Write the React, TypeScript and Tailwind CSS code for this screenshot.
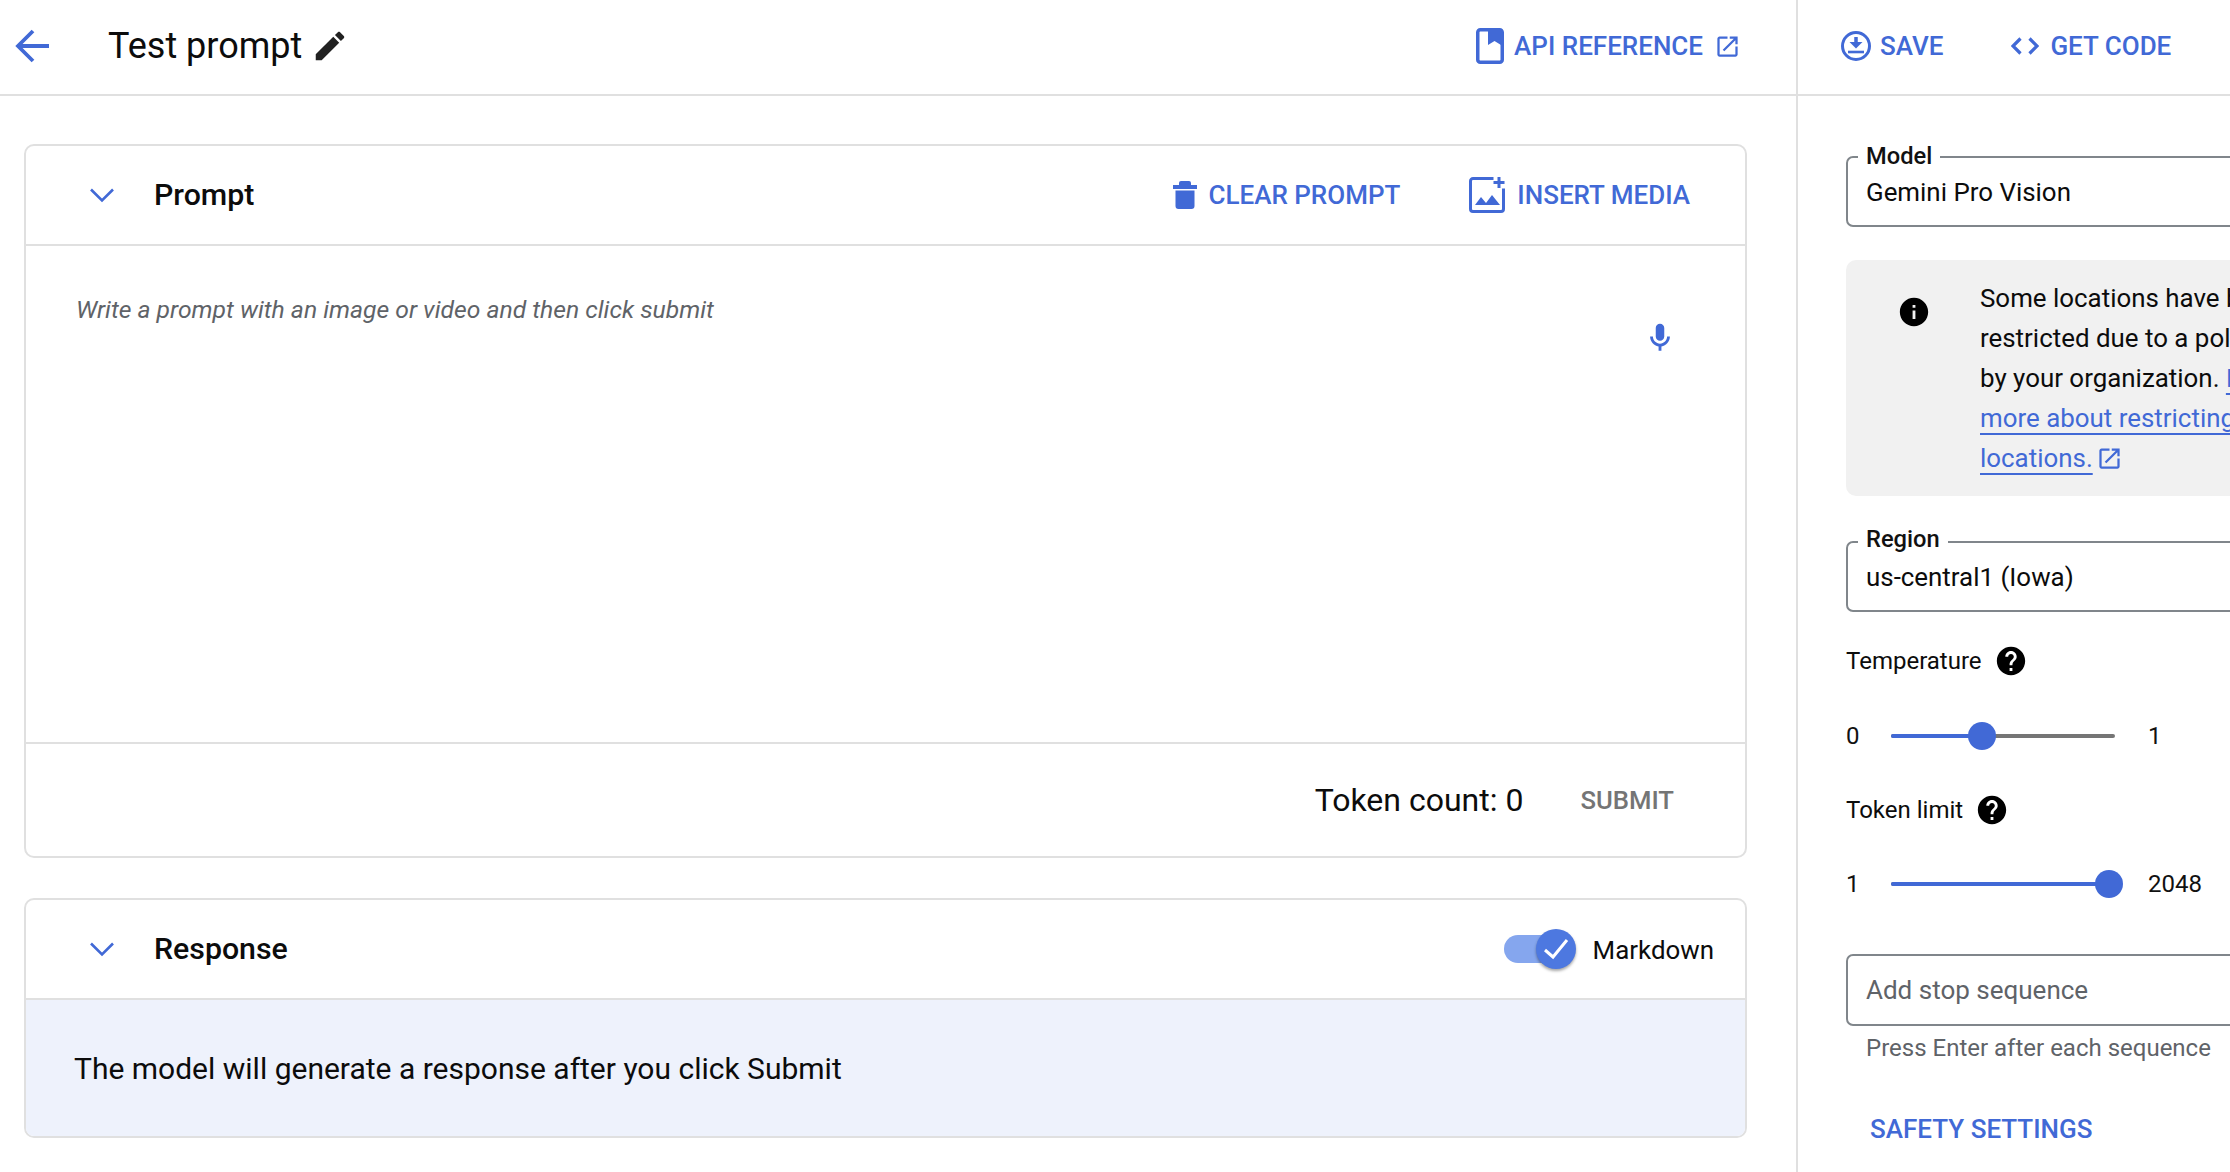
const B = "#4169d6";

function Mi({ d, size, color = B, className = "" }: { d: string; size: number; color?: string; className?: string }) {
  return (
    <svg width={size} height={size} viewBox="0 0 24 24" fill={color} className={"shrink-0 " + className}>
      <path d={d} />
    </svg>
  );
}

const EDIT = "M3 17.25V21h3.75L17.81 9.94l-3.75-3.75L3 17.25zM20.71 7.04c.39-.39.39-1.02 0-1.41l-2.34-2.34c-.39-.39-1.02-.39-1.41 0l-1.83 1.83 3.75 3.75 1.83-1.83z";
const OPEN = "M19 19H5V5h7V3H5c-1.11 0-2 .9-2 2v14c0 1.1.89 2 2 2h14c1.1 0 2-.9 2-2v-7h-2v7zM14 3v2h3.59l-9.83 9.83 1.41 1.41L19 6.41V10h2V3h-7z";
const MIC = "M12 14c1.66 0 3-1.34 3-3V5c0-1.66-1.34-3-3-3S9 3.34 9 5v6c0 1.66 1.34 3 3 3zM17 11c0 2.76-2.24 5-5 5s-5-2.24-5-5H5c0 3.53 2.61 6.43 6 6.92V21h2v-3.08c3.39-.49 6-3.39 6-6.92h-2z";
const INFO = "M12 2C6.48 2 2 6.48 2 12s4.48 10 10 10 10-4.48 10-10S17.52 2 12 2zm1 15h-2v-6h2v6zm0-8h-2V7h2v2z";
const HELP = "M12 2C6.48 2 2 6.48 2 12s4.48 10 10 10 10-4.48 10-10S17.52 2 12 2zm1 17h-2v-2h2v2zm2.07-7.75l-.9.92C13.45 12.9 13 13.5 13 15h-2v-.5c0-1.1.45-2.1 1.17-2.83l1.24-1.26c.37-.36.59-.86.59-1.41 0-1.1-.9-2-2-2s-2 .9-2 2H8c0-2.21 1.79-4 4-4s4 1.79 4 4c0 .88-.36 1.68-.93 2.25z";

function Chevron() {
  return (
    <svg width="26" height="16" viewBox="0 0 26 16" fill="none" stroke={B} strokeWidth="2.6" className="shrink-0">
      <path d="M2 2.5 L13 13.5 L24 2.5" />
    </svg>
  );
}

function Field({ label, value, labelClass }: { label: string; value: string; labelClass: string }) {
  return (
    <div className="relative h-[71px] w-[420px] rounded-[7px] border-2 border-[#80868b] pl-[18px] pt-[15px] text-[25.9px] text-[#0c0c0c]">
      <span className={"absolute left-[10px] bg-white px-[8px] text-[23.7px] font-medium leading-[30px] text-[#111] " + labelClass}>{label}</span>
      <span className="leading-[32px]">{value}</span>
    </div>
  );
}

function Slider({ left, right, pct }: { left: string; right: string; pct: number }) {
  return (
    <div className="flex h-[28px] items-center text-[24px] text-[#111]">
      <span className="w-[45px]">{left}</span>
      <div className="relative h-[4px] w-[224px] rounded-full bg-[#757575]">
        <div className="absolute left-0 top-0 h-[4px] rounded-full bg-[#4169d6]" style={{ width: pct + "%" }} />
        <div className="absolute top-[-12px] ml-[-14px] h-[28px] w-[28px] rounded-full bg-[#4169d6]" style={{ left: pct + "%" }} />
      </div>
      <span className="ml-[33px]">{right}</span>
    </div>
  );
}

export default function App() {
  return (
    <div className="flex h-[1172px] w-[2230px] overflow-hidden bg-white font-['Roboto',sans-serif] text-[#0c0c0c]">
      {/* Left column */}
      <div className="flex h-full w-[1798px] shrink-0 flex-col border-r-2 border-[#e0e0e0]">
        <header className="flex h-[96px] shrink-0 items-center border-b-2 border-[#e0e0e0] pb-[2px]">
          <svg width="36" height="36" viewBox="0 0 36 36" fill="none" stroke={B} strokeWidth="3.8" className="ml-[15px] shrink-0">
            <path d="M34 18 H4 M18 3 L3 18 L18 33" />
          </svg>
          <h1 className="ml-[57px] text-[36px] font-normal leading-none">Test prompt</h1>
          <Mi d={EDIT} size={38} color="#212121" className="ml-[9px]" />
          <div className="ml-auto flex items-center pr-[55px]">
            <svg width="28" height="36" viewBox="0 0 28 36" className="shrink-0">
              <rect x="1.750" y="1.750" width="24.500" height="32.500" rx="2.500" fill="none" stroke={B} strokeWidth="3.500" />
              <path d="M12 2h13v15l-6.500-4L12 17z" fill={B} />
            </svg>
            <span className="ml-[10px] text-[26px] font-medium text-[#4169d6]">API REFERENCE</span>
            <Mi d={OPEN} size={27} className="ml-[11px]" />
          </div>
        </header>
        <main className="flex flex-1 flex-col gap-[40px] pl-[24px] pr-[49px] pt-[48px]">
          <section className="flex h-[714px] flex-col rounded-[10px] border-2 border-[#e0e0e0]">
            <div className="flex h-[100px] shrink-0 items-center border-b-2 border-[#e0e0e0] pl-[63px] pr-[55px]">
              <Chevron />
              <h2 className="ml-[39px] text-[30.3px] font-medium leading-none">Prompt</h2>
              <svg width="24" height="28" viewBox="0 0 24 28" className="ml-auto shrink-0" fill={B}>
                <rect x="6" y="0" width="12" height="6" rx="2" />
                <rect x="0" y="4" width="24" height="4" />
                <path d="M2.500 9.500h19V25a3 3 0 0 1-3 3h-13a3 3 0 0 1-3-3z" />
              </svg>
              <span className="ml-[12px] text-[26px] font-medium text-[#4169d6]">CLEAR PROMPT</span>
              <svg width="36" height="36" viewBox="0 0 36 36" className="ml-[69px] shrink-0" fill="none">
                <path d="M24.500 1.500H4a2.500 2.500 0 0 0-2.500 2.500V32A2.500 2.500 0 0 0 4 34.500H32a2.500 2.500 0 0 0 2.500-2.500V11.500" stroke={B} strokeWidth="3" />
                <path d="M30 0v11M24.500 5.500h11" stroke={B} strokeWidth="3" />
                <path d="M6 28L12 20L17 26L23 18L31 28z" fill={B} />
              </svg>
              <span className="ml-[12px] text-[26px] font-medium text-[#4169d6]">INSERT MEDIA</span>
            </div>
            <div className="flex flex-1 items-start justify-between border-b-2 border-[#e0e0e0] pl-[50px] pr-[68px] pt-[50px]">
              <p className="text-[24.7px] italic leading-[28px] text-[#5f6368]">Write a prompt with an image or video and then click submit</p>
              <Mi d={MIC} size={34} className="mt-[25px]" />
            </div>
            <div className="flex h-[112px] shrink-0 items-center justify-end pr-[71px]">
              <span className="mr-[-3px] text-[32px]">Token count: 0</span>
              <span className="ml-[60px] text-[25.7px] font-medium text-[#757575]">SUBMIT</span>
            </div>
          </section>
          <section className="flex h-[240px] flex-col rounded-[10px] border-2 border-[#e0e0e0]">
            <div className="flex h-[100px] shrink-0 items-center border-b-2 border-[#e0e0e0] pl-[63px] pr-[31px]">
              <Chevron />
              <h2 className="ml-[39px] text-[30.3px] font-medium leading-none">Response</h2>
              <div className="relative ml-auto mr-[1px] h-[28px] w-[60px] rounded-full bg-[#85a6ee]">
                <div className="absolute right-[-12px] top-[-6px] flex h-[40px] w-[40px] items-center justify-center rounded-full bg-[#4d78e0] shadow-[0_2px_3px_rgba(0,0,0,0.35)]">
                  <svg width="26" height="22" viewBox="0 0 26 22" fill="none" stroke="#fff" strokeWidth="3">
                    <path d="M2 12 L10 19 L24 2" />
                  </svg>
                </div>
              </div>
              <span className="ml-[28px] mt-[3px] text-[25.9px]">Markdown</span>
            </div>
            <div className="flex flex-1 items-center rounded-b-[8px] bg-[#eef2fc] pl-[48px]">
              <p className="text-[30px]">The model will generate a response after you click Submit</p>
            </div>
          </section>
        </main>
      </div>
      {/* Right column */}
      <div className="flex h-full min-w-0 flex-1 flex-col">
        <header className="flex h-[96px] shrink-0 items-center border-b-2 border-[#e0e0e0] pb-[2px] pl-[42px]">
          <svg width="32" height="32" viewBox="0 0 32 32" fill="none" stroke={B} strokeWidth="3" className="shrink-0">
            <circle cx="16" cy="16" r="13.500" />
            <path d="M16 7v8" strokeWidth="3.500" />
            <path d="M9.500 12L16 18.500L22.500 12z" fill={B} stroke="none" />
            <path d="M8 22h16" strokeWidth="2.600" />
          </svg>
          <span className="ml-[8px] text-[26px] font-medium text-[#4169d6]">SAVE</span>
          <svg width="28" height="18" viewBox="0 0 28 18" fill="none" stroke={B} strokeWidth="3.200" className="ml-[68px] shrink-0">
            <path d="M9.500 1.500L2 9L9.500 16.500M18.500 1.500L26 9L18.500 16.500" />
          </svg>
          <span className="ml-[11px] text-[26px] font-medium text-[#4169d6]">GET CODE</span>
        </header>
        <div className="w-[432px] overflow-hidden pl-[48px] pt-[60px]">
          <Field label="Model" value="Gemini Pro Vision" labelClass="top-[-17px]" />
          <div className="mt-[33px] flex h-[236px] w-[420px] rounded-[10px] bg-[#f1f1f1] pl-[51px] pt-[35px]">
            <Mi d={INFO} size={34} color="#000" className="shrink-0" />
            <div className="ml-[49px] mt-[-17px] whitespace-nowrap text-[25.9px] leading-[40px] text-[#0c0c0c]">
              <div>Some locations have been</div>
              <div>restricted due to a policy</div>
              <div>
                by your organization. <a className="text-[#4169d6] underline decoration-2 underline-offset-[6px]">Learn</a>
              </div>
              <div><a className="text-[#4169d6] underline decoration-2 underline-offset-[6px]">more about restricting</a></div>
              <div className="flex items-center">
                <a className="text-[#4169d6] underline decoration-2 underline-offset-[6px]">locations.</a>
                <Mi d={OPEN} size={27} className="ml-[3px]" />
              </div>
            </div>
          </div>
          <div className="mt-[45px]">
            <Field label="Region" value="us-central1 (Iowa)" labelClass="top-[-19px]" />
          </div>
          <div className="mt-[32px] flex items-center text-[24px] leading-[32px]">
            <span>Temperature</span>
            <Mi d={HELP} size={34} color="#000" className="ml-[12px]" />
          </div>
          <div className="mt-[44px]">
            <Slider left="0" right="1" pct={40.5} />
          </div>
          <div className="mt-[43px] flex items-center text-[24px] leading-[32px]">
            <span>Token limit</span>
            <Mi d={HELP} size={34} color="#000" className="ml-[12px]" />
          </div>
          <div className="mt-[43px]">
            <Slider left="1" right="2048" pct={97.5} />
          </div>
          <div className="mt-[56px] h-[72px] w-[420px] rounded-[7px] border-2 border-[#80868b] pl-[18px] text-[26px] leading-[68px] text-[#5f6368]">Add stop sequence</div>
          <p className="mt-[8px] pl-[20px] text-[24px] leading-[28px] text-[#5f6368]">Press Enter after each sequence</p>
          <p className="mt-[52px] pl-[24px] text-[26px] font-medium leading-[30px] text-[#4169d6]">SAFETY SETTINGS</p>
        </div>
      </div>
    </div>
  );
}
